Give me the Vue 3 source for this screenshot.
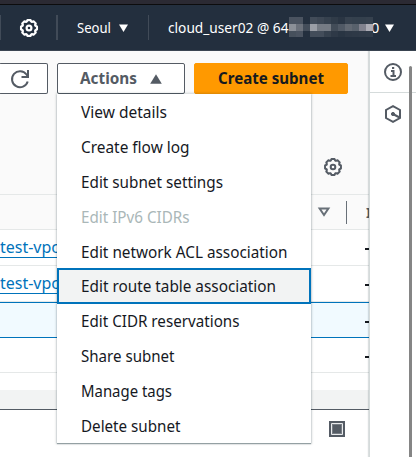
<script setup>
const items = [
  { label: 'View details', width: 86 },
  { label: 'Create flow log', width: 108.5 },
  { label: 'Edit subnet settings', width: 142 },
  { label: 'Edit IPv6 CIDRs', width: 108.5, disabled: true },
  { label: 'Edit network ACL association', width: 206.5 },
  { label: 'Edit route table association', width: 195, active: true },
  { label: 'Edit CIDR reservations', width: 158.5 },
  { label: 'Share subnet', width: 93.5 },
  { label: 'Manage tags', width: 91 },
  { label: 'Delete subnet', width: 99.5 },
]
const mosaic = [
  '#4a5360', '#4a5360', '#232f3e', '#424c59', '#3d4754', '#36414e', '#303b48', '#2a3543', '#36414e', '#34404d', '#34404d', '#36414e',
  '#8b9098', '#6b717b', '#434d5a', '#9b9fa7', '#757b84', '#757b84', '#424c58', '#505965', '#626973', '#58616c', '#81828e', '#adadb6',
  '#46505c', '#4a5360', '#232f3e', '#434d5a', '#434d5a', '#36414e', '#2e3947', '#293543', '#2d3846', '#2e3947', '#2f3a48', '#303b49',
]
const rows = [
  { link: 'test-vpc' },
  { link: 'test-vpc' },
  { selected: true },
  { last: true },
]
function cog(n, r1, r2) {
  let d = ''
  for (let i = 0; i < n; i++) {
    const a = (i * 2 * Math.PI) / n - Math.PI / 2
    const s = Math.PI / n
    for (const [o, r] of [[-0.85, r1], [-0.5, r2], [0.5, r2], [0.85, r1]]) {
      d += (d ? 'L' : 'M') + (10 + r * Math.cos(a + o * s)).toFixed(2) + ' ' + (10 + r * Math.sin(a + o * s)).toFixed(2)
    }
  }
  return d + 'Z'
}
const cogPath = cog(8, 6.8, 8.1)
</script>

<template>
  <div class="page">
    <div class="strip"></div>
    <header class="nav">
      <div class="cell first">
        <svg width="20" height="20" viewBox="0 0 20 20" fill="none" stroke="currentColor" stroke-width="2.2" stroke-linejoin="round">
          <path :d="cogPath" /><circle cx="10" cy="10" r="2.4" />
        </svg>
      </div>
      <div class="cell region">
        <svg class="label" width="35" height="20"><text x="0" y="15" textLength="34" lengthAdjust="spacingAndGlyphs">Seoul</text></svg>
        <svg width="9" height="8" viewBox="0 0 9 8"><path d="M0 .5H9L4.5 8Z" fill="currentColor" /></svg>
      </div>
      <div class="cell account">
        <svg class="label" width="121" height="20"><text x="0" y="15" textLength="120.5" lengthAdjust="spacingAndGlyphs">cloud_user02 @ 64</text></svg>
        <div class="mosaic"><i v-for="(c, i) in mosaic" :key="i" :style="{ background: c }"></i></div>
        <svg class="label zero" width="9" height="20"><text x="0" y="15">0</text></svg>
        <svg class="caret" width="9" height="8" viewBox="0 0 9 8"><path d="M0 .5H9L4.5 8Z" fill="currentColor" /></svg>
      </div>
    </header>
    <div class="body">
      <main class="main">
        <div class="toolbar">
          <button class="btn refresh">
            <svg width="20" height="20" viewBox="0 0 20 20" fill="none" stroke="currentColor" stroke-width="2">
              <path d="M17.7 12.5A8 8 0 1 1 16.5 5.5L18 7.8" /><path d="M18 1V8H11.5" />
            </svg>
          </button>
          <button class="btn actions">
            <svg class="bold" width="58" height="22"><text x="0" y="16" textLength="57" lengthAdjust="spacingAndGlyphs">Actions</text></svg>
            <svg width="12" height="10" viewBox="0 0 12 10"><path d="M6 .2L11.8 9.8H.2Z" fill="currentColor" /></svg>
          </button>
          <button class="btn create">
            <svg class="bold" width="107" height="22"><text x="0" y="16" textLength="106" lengthAdjust="spacingAndGlyphs">Create subnet</text></svg>
          </button>
          <div class="menu">
            <div v-for="it in items" :key="it.label" class="item" :class="{ active: it.active, disabled: it.disabled }">
              <svg width="214" height="24"><text x="0" y="17.5" :textLength="it.width" lengthAdjust="spacingAndGlyphs">{{ it.label }}</text></svg>
            </div>
          </div>
        </div>
        <div class="prefs">
          <svg width="20" height="20" viewBox="0 0 20 20" fill="none" stroke="currentColor" stroke-width="2" stroke-linejoin="round">
            <path :d="cogPath" /><circle cx="10" cy="10" r="2.3" />
          </svg>
        </div>
        <div class="thead">
          <svg width="12" height="10" viewBox="0 0 12 10" fill="none" stroke="currentColor" stroke-width="2"><path d="M1.6 1.5H10.4L6 8Z" /></svg>
          <span class="divider"></span>
          <b class="col">I</b>
        </div>
        <div v-for="(r, i) in rows" :key="i" class="row" :class="{ selected: r.selected, last: r.last }">
          <svg v-if="r.link" class="link" width="60" height="24"><text x="0" y="17" textLength="59" lengthAdjust="spacingAndGlyphs">{{ r.link }}</text><path d="M0 21.5H58" stroke="currentColor" /></svg>
          <span class="dash"></span>
        </div>
        <div class="gap"></div>
        <div class="scroll"></div>
        <div class="split">
          <svg width="16" height="16" viewBox="0 0 16 16"><path d="M0 0H16V16H0Z" fill="#545b64" /><path d="M2.5 2.5H13.5V13.5H2.5Z" fill="#777d84" stroke="#e9ebed" /><path d="M4 4H12V12H4Z" fill="#545b64" /></svg>
        </div>
      </main>
      <aside class="side">
        <div class="tool">
          <svg width="18" height="18" viewBox="0 0 18 18" fill="none" stroke="currentColor" stroke-width="2"><circle cx="9" cy="9" r="8" /><path d="M7 8H9.5V13M6.5 13H12M8 5H10.2" /></svg>
        </div>
        <div class="tool second">
          <svg width="18" height="18" viewBox="0 0 18 18" fill="none" stroke="currentColor" stroke-width="2"><path d="M9 1.1L16 5V13L9 16.9L2 13V5Z" /><path d="M9 9L15.5 12.5" /><circle cx="9" cy="9" r="1.6" fill="currentColor" stroke-width="1" /></svg>
        </div>
        <div class="bar"></div>
      </aside>
    </div>
  </div>
</template>

<style>
body { margin: 0; overflow: hidden; }
</style>
<style scoped>
.page { width: 416px; height: 457px; overflow: hidden; background: #fff; font-family: "Noto Sans", "Open Sans", sans-serif; color: #16191f; }
.page * { box-sizing: border-box; }
svg { display: block; flex: none; overflow: visible; }
text { fill: currentColor; }
.strip { height: 5px; background: #2b2a33; border-bottom: 1px solid #0c0c0d; }
.nav { height: 46px; display: flex; padding-top: 10px; background: #232f3e; border-bottom: 1px solid #3b4552; color: #fff; font-size: 14.5px; }
.cell { height: 25px; display: flex; align-items: center; }
.first { width: 56px; padding-left: 18px; border-left: 1px solid #414b58; }
.region { width: 92px; padding-left: 19px; gap: 7px; border-left: 2px solid #414b58; }
.account { flex: 1; padding-left: 19px; border-left: 1px solid #414b58; }
.mosaic { display: grid; grid-template-columns: repeat(12, 7px); grid-template-rows: 7px 7px 6px; position: relative; z-index: 1; margin-top: -1px; }
.zero { margin-left: -2px; }
.caret { margin-left: 5px; }
.body { height: 406px; display: flex; }
.main { width: 369px; flex: none; background: #fafafa; }
.toolbar { position: relative; height: 56px; padding-top: 12px; display: flex; gap: 9px; }
.btn { height: 31px; padding: 0; display: flex; align-items: center; justify-content: center; border: 1px solid #545b64; border-radius: 2px; background: #fff; color: #545b64; font: 700 16px "Noto Sans", sans-serif; }
.refresh { width: 49px; margin-left: -1px; border-left: 0; padding-right: 7px; }
.actions { width: 128px; gap: 12px; }
.create { width: 154px; border-color: #ff9900; background: #ff9900; color: #16191f; }
.menu { position: absolute; z-index: 3; left: 57px; top: 43px; width: 254px; height: 349px; background: #fff; box-shadow: 0 1px 1px rgba(0, 28, 36, .35), 0 0 2px 1px rgba(0, 28, 36, .16); font-size: 15.5px; }
.item { height: 35px; padding-left: 24px; display: flex; align-items: center; }
.active { height: 36px; margin: -1px 0 0; padding-left: 22px; border: 2px solid #0073bb; background: #f2f3f3; }
.active ~ .item { position: relative; top: -.5px; }
.disabled { color: #aab7b8; }
.prefs { height: 87px; padding: 50px 0 0 323px; color: #545b64; }
.thead { height: 36px; display: flex; align-items: center; padding-left: 318px; border: solid #e5e8e8; border-width: 1px 0; color: #687078; }
.divider { flex: none; width: 1px; height: 23px; margin-left: 16px; background: #687078; }
.col { margin-left: 19px; font-size: 14px; color: #545b64; }
.row { height: 36px; display: flex; align-items: center; background: #fff; border-bottom: 1px solid #e5e8e8; }
.row.selected { background: #f1faff; border: solid #0073bb; border-width: 1px 0; }
.row.last { height: 35px; }
.link { color: #0073bb; font-size: 15.5px; }
.dash { width: 4px; height: 2px; margin: 3px 0 0 auto; background: #16191f; }
.gap { height: 17px; background: #fff; }
.scroll { height: 20px; background: #f2f3f3; border-bottom: 1px solid #545b64; }
.split { height: 60px; padding: 11px 0 0 329px; background: #fff; }
.side { position: relative; flex: 1; background: #fff; border-left: 1px solid #d5dbdb; box-shadow: -1px 0 1px rgba(0, 28, 36, .14); }
.tool { height: 42px; padding: 12px 0 0 14px; border-bottom: 1px solid #d5dbdb; color: #545b64; }
.second { border: 0; }
.bar { position: absolute; left: 39px; top: 15px; width: 3px; height: 400px; border-radius: 2px 2px 0 0; background: #858585; }
</style>
